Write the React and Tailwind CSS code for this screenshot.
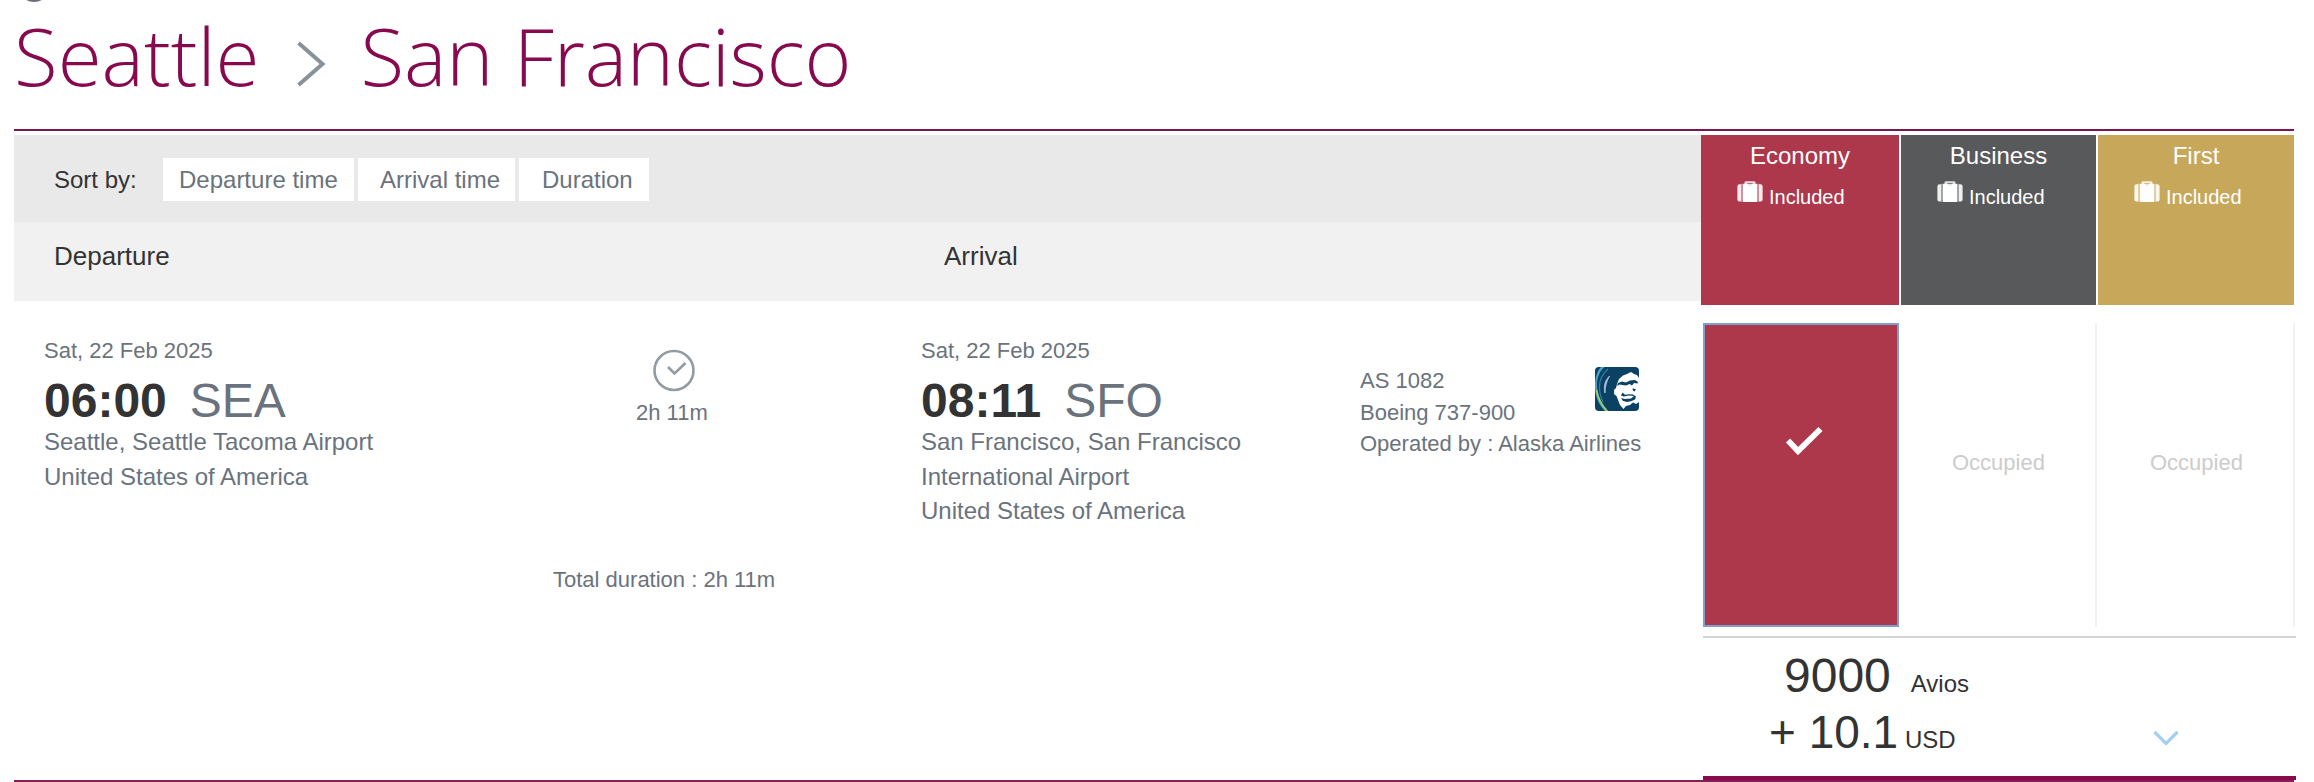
const ARIAL = "font-['Liberation_Sans',Arial,sans-serif]";

function Suitcase() {
  return (
    <svg className="h-[22px] w-[26px] shrink-0" viewBox="0 0 26 22">
      <g fill="#fff">
        <path d="M4 3.200V20.500H2.200Q.4 20.500.4 18.600V5.400Q.4 3.200 2.500 3.200Z" opacity=".9" />
        <path d="M22 3.200V20.500H23.800Q25.600 20.500 25.600 18.600V5.400Q25.600 3.200 23.500 3.200Z" opacity=".9" />
        <rect x="4" y="2.800" width="2" height="18" opacity=".45" />
        <rect x="20" y="2.800" width="2" height="18" opacity=".45" />
        <rect x="6" y="2.800" width="14" height="18.200" rx=".5" />
        <path d="M7.500 3V1.600Q7.500.2 9 .2h8q1.500 0 1.500 1.400V3h-2.800V2h-5.400v1z" opacity=".8" />
      </g>
      <rect x="11" y="3.400" width="4" height="1" fill="#000" opacity=".15" />
    </svg>
  );
}

function Logo() {
  return (
    <svg className="h-[44px] w-[44px] shrink-0" viewBox="0 0 44 44">
      <defs>
        <clipPath id="tile">
          <rect width="44" height="44" rx="4" />
        </clipPath>
      </defs>
      <g clipPath="url(#tile)">
        <rect width="44" height="44" fill="#0b4264" />
        <path d="M9.500 0C4.500 4 2 11 2 18C2 29 6 38 13 45L11 45C4 38 0 30 0 19C0 11 2 4 6 0Z" fill="#4aa5c4" />
        <path d="M1.500 23C3 31 7 39 13 45" fill="none" stroke="#a5cb6a" strokeWidth="1.700" />
        <path d="M13 2C7 7 4.500 13 4.500 20C4.500 26 6 31 8 35" fill="none" stroke="#2e7ea4" strokeWidth="1.200" />
        <path d="M14.500 9C9.500 14 8.500 20 10 26C10 20 11.500 14 14.500 9Z" fill="#a9b9df" stroke="#a9b9df" strokeWidth="1" />
        <path d="M19 23L21 21L22 17L24 12L28 8.500L32 7L36 5L39 7L42 8L44 11V35L41 37L38 35.500L35 38L31 39L28.500 42L25 38L23 33L21.500 29L19 27Z" fill="#fff" />
        <path d="M23 16L27 14.500L31 15.500L35 13.500L40 13L43 15L42.500 16.500L39 16L37 18.500L34.500 17L31 18.500L27.500 18L24.500 17.500L22 19Z" fill="#0b4264" />
        <path d="M27.500 25.500L26 28.500L28.500 29.500L34 28.500L39 29L36 31.500L30 32L26 31L28 34L32 35L36 34.200L40 32.500L41 29.500L38 27.500L34 27.300L30 27.800Z" fill="#0b4264" />
        <path d="M37.500 21.500L41 22L39.500 24.500L38 23.800Z" fill="#0b4264" />
      </g>
    </svg>
  );
}

function Cabin({ name, className, inner }) {
  return (
    <div className={`h-[170px] text-white ${className}`}>
      <div className="pt-[7px] text-center text-[24px] leading-[28px]">{name}</div>
      <div className={`flex items-start pt-[11px] ${inner}`}>
        <Suitcase />
        <span className="ml-[6px] mt-[4px] text-[20px] leading-[24px]">Included</span>
      </div>
    </div>
  );
}

function Stop({ time, code, lines }) {
  return (
    <div className="text-[#6a737d]">
      <div className="pt-[15px] text-[22px] leading-[26px]">Sat, 22 Feb 2025</div>
      <div className="mt-[9px] flex text-[48px] leading-[56px]">
        <b className="text-[#333]">{time}</b>
        <span className="ml-[23px]">{code}</span>
      </div>
      <div className="-mt-[4px] text-[24px] leading-[34.500px]">
        {lines.map((l) => (
          <div key={l} className="whitespace-nowrap">{l}</div>
        ))}
      </div>
    </div>
  );
}

export default function App() {
  return (
    <div className={`flex h-[782px] w-[2314px] flex-col overflow-hidden bg-white ${ARIAL}`}>
      <header className="relative ml-[14px] flex h-[129px] items-start text-[80px] font-light text-[#870a4f] font-['Open_Sans',sans-serif]">
        <div className="absolute left-[4px] -top-[30px] h-[32px] w-[32px] rounded-full bg-[#6a7078]" />
        <h1 className="leading-[110px]">Seattle</h1>
        <svg className="ml-[37px] mt-[41px] h-[46px] w-[30px]" viewBox="0 0 30 46" fill="none" stroke="#87929a" strokeWidth="4">
          <path d="M1.500 2L25.500 23L1.500 44" />
        </svg>
        <h1 className="ml-[34px] leading-[110px] tracking-[-0.2px]">San Francisco</h1>
      </header>
      <div className="ml-[14px] h-[2px] w-[2280px] shrink-0 bg-[#78164f]" />

      <div className="mt-[4px] flex h-[170px] shrink-0 pl-[14px]">
        <div className="w-[1687px]">
          <div className="flex h-[87px] items-start bg-[#e9e9e9] pl-[40px] pt-[23px] text-[24px] leading-[43px] text-[#6a737d]">
            <span className="w-[109px] text-[#333]">Sort by:</span>
            <button className="w-[191px] bg-white pl-[16px] text-left">Departure time</button>
            <button className="ml-[4px] w-[157px] bg-white pl-[22px] text-left">Arrival time</button>
            <button className="ml-[4px] w-[130px] bg-white pl-[23px] text-left">Duration</button>
          </div>
          <div className="flex h-[79px] bg-[#f1f1f1] pl-[40px] pt-[19px] text-[26px] leading-[30px] text-[#333]">
            <span className="w-[890px]">Departure</span>
            <span>Arrival</span>
          </div>
        </div>
        <Cabin name="Economy" className="w-[198px] bg-[#ad384c]" inner="pl-[36px]" />
        <Cabin name="Business" className="ml-[2px] w-[195px] bg-[#58595b]" inner="pl-[36px]" />
        <Cabin name="First" className="ml-[2px] w-[196px] bg-[#c7a85b]" inner="pl-[36px]" />
      </div>

      <div className="mt-[18px] flex h-[457px] shrink-0 pl-[44px] text-[22px] text-[#6a737d]">
        <div className="w-[509px]">
          <Stop time="06:00" code="SEA" lines={["Seattle, Seattle Tacoma Airport", "United States of America"]} />
        </div>
        <div className="w-[368px]">
          <div className="ml-[82px] w-[78px] pt-[26px]">
            <svg className="ml-[18px] h-[43px] w-[43px]" viewBox="0 0 43 43" fill="none" stroke="#929ba1" strokeWidth="2.600">
              <circle cx="21" cy="21.500" r="19.500" />
              <path d="M15 18L21.500 24.500L32.500 14" />
            </svg>
          </div>
          <div className="ml-[83px] mt-[8px] leading-[26px]">2h 11m</div>
          <div className="mt-[141px] leading-[26px]">Total duration : 2h 11m</div>
        </div>
        <div className="w-[439px]">
          <Stop time="08:11" code="SFO" lines={["San Francisco, San Francisco", "International Airport", "United States of America"]} />
        </div>
        <div className="w-[343px] pt-[42px] leading-[31.500px]">
          <div className="flex h-[31.500px] items-start justify-between pr-[64px]">
            <span>AS 1082</span>
            <div className="mt-[2px]">
              <Logo />
            </div>
          </div>
          <div>Boeing 737-900</div>
          <div>Operated by : Alaska Airlines</div>
        </div>
        <div className="w-[593px]">
          <div className="flex h-[304px]">
            <div className="w-[196px] border-2 border-[#7fa0c9] bg-[#ad384c]">
              <svg className="ml-[79px] mt-[100px] h-[32px] w-[40px]" viewBox="0 0 40 32" fill="none" stroke="#fff" strokeWidth="5.800">
                <path d="M4 15.500L14 26L36.500 4" />
              </svg>
            </div>
            <div className="w-[198px] border-r-2 border-[#f1f1f1] pl-[53px] pt-[127px] leading-[26px] text-[#ccc]">Occupied</div>
            <div className="w-[198px] border-r-2 border-[#f1f1f1] pl-[53px] pt-[127px] leading-[26px] text-[#ccc]">Occupied</div>
          </div>
          <div className="mt-[9px] h-[140px] border-t-2 border-[#d4d4d4] text-[#333]">
            <div className="flex h-[56px] items-baseline pl-[81px] pt-[10px] text-[48px] leading-[56px]">
              9000<span className="ml-[20px] text-[24px]">Avios</span>
            </div>
            <div className="mt-[10px] flex items-baseline pl-[66px] text-[46px] leading-[56px]">
              <span className="w-[136px] whitespace-nowrap">+ 10.1</span>
              <span className="text-[24px]">USD</span>
              <svg className="ml-[197px] h-[18px] w-[26px]" viewBox="0 0 26 18" fill="none" stroke="#a5cfee" strokeWidth="3.200">
                <path d="M1.500 2L13 13.500L24.500 2" />
              </svg>
            </div>
          </div>
          <div className="h-[4px] bg-[#870a4f]" />
        </div>
      </div>
      <div className="ml-[14px] h-[2px] w-[2280px] shrink-0 bg-[#862052]" />
    </div>
  );
}
